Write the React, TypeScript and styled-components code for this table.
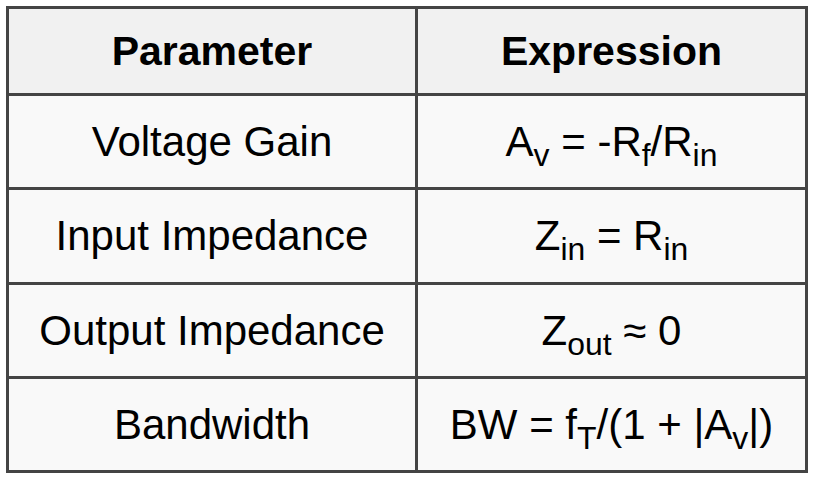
import React from 'react';
import styled, { createGlobalStyle } from 'styled-components';

const GlobalStyle = createGlobalStyle`
  html, body {
    margin: 0;
    padding: 0;
    background: #ffffff;
  }
  body {
    font-family: "Liberation Sans", Arial, sans-serif;
    color: #000;
  }
`;

const Page = styled.div`
  padding: 6px;
`;

const Table = styled.div`
  display: grid;
  width: 802px;
  box-sizing: border-box;
  grid-template-columns: 406px 387px;
  grid-template-rows: 84px 91px 92px 91px 91px;
  gap: 3px;
  padding: 3px;
  background: #444444;
`;

const Cell = styled.div<{ head?: boolean }>`
  display: flex;
  align-items: center;
  justify-content: center;
  background: ${({ head }) => (head ? '#f1f1f1' : '#f9f9f9')};
  font-size: ${({ head }) => (head ? '41px' : '42px')};
  font-weight: ${({ head }) => (head ? 700 : 400)};
  white-space: nowrap;
  line-height: 1;
`;

const Text = styled.span`
  display: inline-block;
`;

const Sub = styled.sub`
  font-size: 0.76em;
  vertical-align: -0.3em;
  line-height: 0;
`;

interface Row {
  name: string;
  expr: React.ReactNode;
}

const rows: Row[] = [
  {
    name: 'Voltage Gain',
    expr: (
      <>
        A<Sub>v</Sub> = -R<Sub>f</Sub>/R<Sub>in</Sub>
      </>
    ),
  },
  {
    name: 'Input Impedance',
    expr: (
      <>
        Z<Sub>in</Sub> = R<Sub>in</Sub>
      </>
    ),
  },
  {
    name: 'Output Impedance',
    expr: (
      <>
        Z<Sub>out</Sub> ≈ 0
      </>
    ),
  },
  {
    name: 'Bandwidth',
    expr: (
      <>
        BW = f<Sub>T</Sub>/(1 + |A<Sub>v</Sub>|)
      </>
    ),
  },
];

const App: React.FC = () => (
  <Page>
    <GlobalStyle />
    <Table>
      <Cell head>
        <Text>Parameter</Text>
      </Cell>
      <Cell head>
        <Text>Expression</Text>
      </Cell>
      {rows.map((r) => (
        <React.Fragment key={r.name}>
          <Cell>
            <Text>{r.name}</Text>
          </Cell>
          <Cell>
            <Text>{r.expr}</Text>
          </Cell>
        </React.Fragment>
      ))}
    </Table>
  </Page>
);

export default App;
